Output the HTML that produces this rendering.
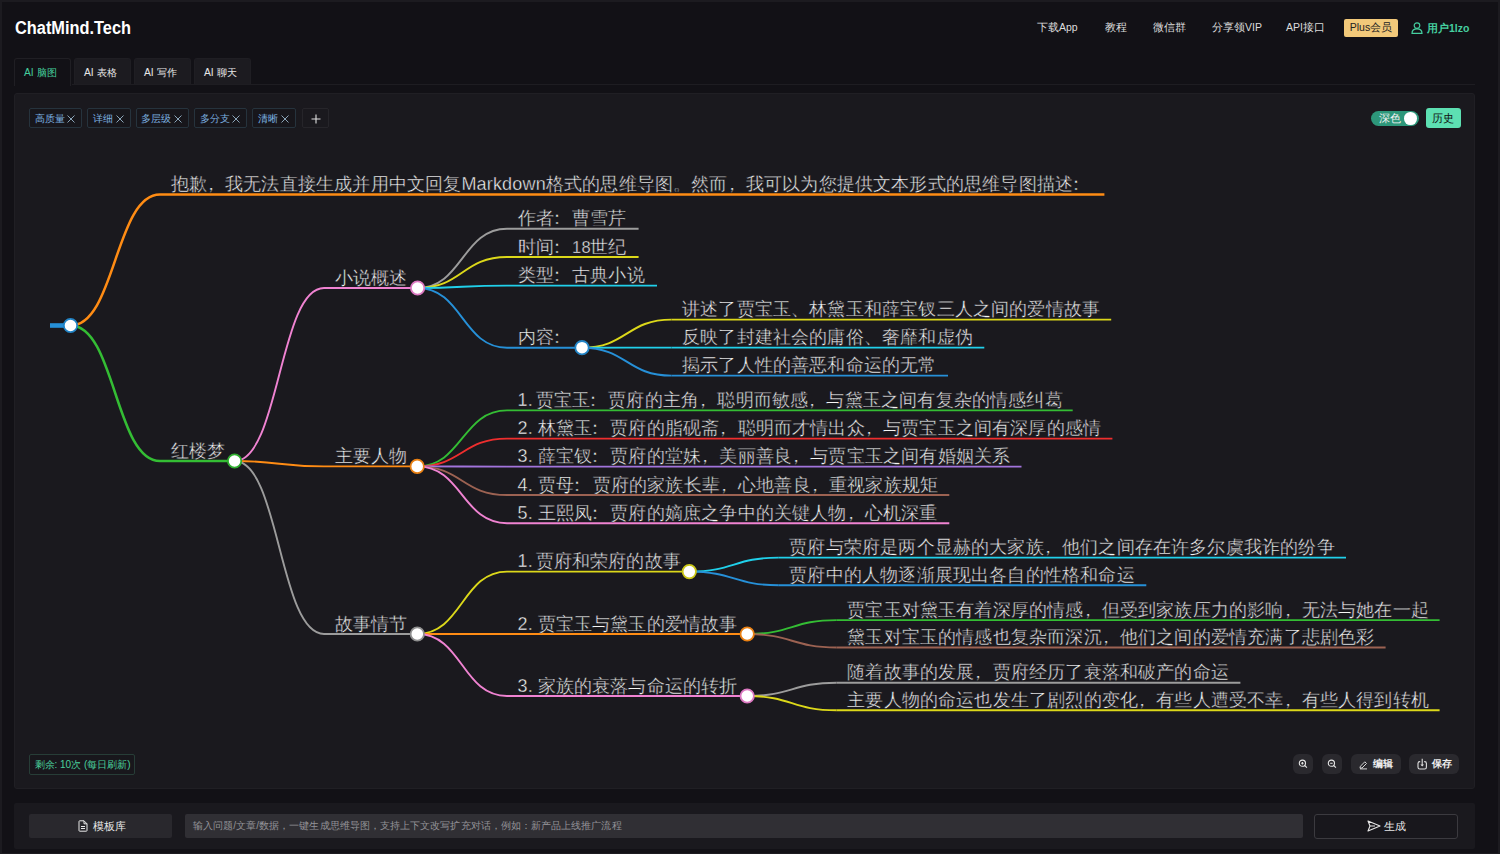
<!DOCTYPE html>
<html><head><meta charset="utf-8">
<style>
*{box-sizing:border-box;margin:0;padding:0}
html,body{width:1500px;height:854px;overflow:hidden}
body{background:#121116;font-family:"Liberation Sans",sans-serif;color:#e6e6e6;position:relative}
.abs{position:absolute}
.frameL{left:0;top:0;width:1.5px;height:854px;background:#1c1b20}
.frameB{left:0;top:852.5px;width:1500px;height:1.5px;background:#1c1b20}
.frameT{left:0;top:0;width:1500px;height:1.5px;background:#1c1b20}
.frameR{left:1498.3px;top:0;width:1.7px;height:854px;background:#1c1b20}
.logo{left:14.5px;top:18px;font-size:17.5px;font-weight:bold;color:#fff;line-height:20px;transform:scaleX(0.935);transform-origin:0 0}
.nav{top:19.8px;font-size:10.5px;line-height:14px;color:#dcdcdc;white-space:nowrap}
.plus{left:1344px;top:19px;width:54px;height:17.5px;background:#f2c97a;border-radius:2px;color:#222;font-size:10.5px;line-height:17.5px;text-align:center}
.user{left:1427px;top:20.7px;font-size:10.5px;line-height:14px;color:#45cf9f;font-weight:bold}
.tab{top:57.5px;width:57px;height:27px;background:#1c1b20;border:1px solid #1f1e23;border-bottom:none;border-radius:3px 3px 0 0;font-size:10.3px;line-height:27px;color:#e8e8e8;padding-left:9px;white-space:nowrap}
.tab.act{background:#121116;border-color:#201f24;color:#45cf9f;height:28px}
.tabline{left:72px;top:84px;width:1403px;height:1px;background:#1e1d22}
.panel{left:14px;top:92.5px;width:1461px;height:696px;background:#1a191e;border:1px solid #201f24;border-radius:3px}
.tag{top:108px;height:20px;border:1px solid #26333d;background:#17161b;border-radius:2px;font-size:9.8px;line-height:19.5px;color:#7cb0e0;padding-left:4.5px;white-space:nowrap}
.tag i{font-style:normal;color:#8aa4b8;font-size:11px;position:absolute;right:6px;top:0}
.tagplus{left:302px;top:108px;width:27px;height:20px;border:1px solid #26252a;border-radius:2px;color:#e0e0e0;font-size:15px;line-height:17px;text-align:center}
.toggle{left:1371px;top:110.8px;width:48px;height:15.6px;background:#2d977a;border-radius:8px}
.toggle span{position:absolute;left:8px;top:0;font-size:10.5px;line-height:15.6px;color:#f0f0f0}
.toggle b{position:absolute;left:33px;top:1.6px;width:12.6px;height:12.6px;border-radius:50%;background:#fff}
.hist{left:1425.5px;top:108px;width:35px;height:20px;background:#5de0b2;border-radius:3px;color:#111;font-size:11px;line-height:20px;text-align:center}
.remain{left:28.5px;top:754px;width:106px;height:21px;border:1px solid #273d37;background:#18171c;border-radius:2px;color:#4acf9c;font-size:10px;line-height:19px;padding-left:5px;white-space:nowrap}
.tbtn{top:754px;height:20px;background:#2a292e;border-radius:6px;color:#eee;font-size:10px;line-height:20px;white-space:nowrap}
.bar{left:14px;top:802.5px;width:1461px;height:46px;background:#1a191e;border-radius:2px}
.tpl{left:29px;top:814px;width:142.5px;height:24px;background:#29282d;border-radius:2px;font-size:11px;line-height:24px;color:#e8e8e8}
.inp{left:184.5px;top:814px;width:1118px;height:24px;background:#302f34;border-radius:2px;font-size:10px;letter-spacing:0.07px;line-height:24px;color:#939297;padding-left:8.5px;white-space:nowrap}
.gen{left:1314px;top:813.5px;width:144px;height:25px;border:1px solid #3b3a3f;background:#18171c;border-radius:3px;font-size:11px;line-height:23px;color:#e8e8e8}
svg.mm{position:absolute;left:0;top:0}
svg.mm .tx text{font-family:"Liberation Sans",sans-serif;font-size:18px;letter-spacing:0.18px;fill:#f6f6f6;stroke:#1a191e;stroke-width:0.4px}
</style></head>
<body>
<div class="abs frameL"></div><div class="abs frameT"></div><div class="abs frameR"></div><div class="abs frameB"></div>
<div class="abs logo">ChatMind.Tech</div>
<div class="abs nav" style="left:1037px">下载App</div>
<div class="abs nav" style="left:1104.5px">教程</div>
<div class="abs nav" style="left:1153px">微信群</div>
<div class="abs nav" style="left:1212px">分享领VIP</div>
<div class="abs nav" style="left:1286px">API接口</div>
<div class="abs plus">Plus会员</div>
<svg class="abs" style="left:1411px;top:21.5px" width="12" height="12" viewBox="0 0 12 12"><circle cx="6" cy="3.6" r="2.8" fill="none" stroke="#45cf9f" stroke-width="1.2"/><path d="M1,11.4 C1,8.2 3,6.9 6,6.9 C9,6.9 11,8.2 11,11.4 Z" fill="none" stroke="#45cf9f" stroke-width="1.2"/></svg>
<div class="abs user">用户1lzo</div>

<div class="abs tab act" style="left:14px">AI 脑图</div>
<div class="abs tab" style="left:74px">AI 表格</div>
<div class="abs tab" style="left:134px">AI 写作</div>
<div class="abs tab" style="left:194px">AI 聊天</div>
<div class="abs tabline"></div>

<div class="abs panel"></div>
<div class="abs tag" style="left:29px;width:53px">高质量<svg class="abs" style="right:6px;top:5.5px" width="8" height="8" viewBox="0 0 8 8"><path d="M0.5,0.5 L7.5,7.5 M7.5,0.5 L0.5,7.5" stroke="#8aa4b8" stroke-width="1"/></svg></div>
<div class="abs tag" style="left:87px;width:43.5px">详细<svg class="abs" style="right:6px;top:5.5px" width="8" height="8" viewBox="0 0 8 8"><path d="M0.5,0.5 L7.5,7.5 M7.5,0.5 L0.5,7.5" stroke="#8aa4b8" stroke-width="1"/></svg></div>
<div class="abs tag" style="left:135.5px;width:53.5px">多层级<svg class="abs" style="right:6px;top:5.5px" width="8" height="8" viewBox="0 0 8 8"><path d="M0.5,0.5 L7.5,7.5 M7.5,0.5 L0.5,7.5" stroke="#8aa4b8" stroke-width="1"/></svg></div>
<div class="abs tag" style="left:194px;width:53px">多分支<svg class="abs" style="right:6px;top:5.5px" width="8" height="8" viewBox="0 0 8 8"><path d="M0.5,0.5 L7.5,7.5 M7.5,0.5 L0.5,7.5" stroke="#8aa4b8" stroke-width="1"/></svg></div>
<div class="abs tag" style="left:252px;width:43.5px">清晰<svg class="abs" style="right:6px;top:5.5px" width="8" height="8" viewBox="0 0 8 8"><path d="M0.5,0.5 L7.5,7.5 M7.5,0.5 L0.5,7.5" stroke="#8aa4b8" stroke-width="1"/></svg></div>
<div class="abs tagplus"><svg class="abs" style="left:8px;top:4.5px" width="10" height="10" viewBox="0 0 10 10"><path d="M5,0.5 V9.5 M0.5,5 H9.5" stroke="#e0e0e0" stroke-width="1.1"/></svg></div>
<div class="abs toggle"><span>深色</span><b></b></div>
<div class="abs hist">历史</div>

<svg class="mm" width="1500" height="854" viewBox="0 0 1500 854">
<line x1="50" y1="325.5" x2="70.5" y2="325.5" stroke="#2690d8" stroke-width="4.6"/>
<g fill="none"><path d="M70.5,325.5C115.25,325.5 115.25,194.6 160,194.6" stroke="#ff8c14" stroke-width="2.5"/><path d="M70.5,325.5C115.25,325.5 115.25,461 160,461" stroke="#34bd34" stroke-width="2.5"/><path d="M234.6,461C279.3,461 279.3,288 324,288" stroke="#f083d2" stroke-width="1.9"/><path d="M234.6,461C279.3,461 279.3,466.4 324,466.4" stroke="#ff8c14" stroke-width="1.9"/><path d="M234.6,461C279.3,461 279.3,634 324,634" stroke="#9c9c9c" stroke-width="1.9"/><path d="M417.6,288C462.3,288 462.3,228.8 507,228.8" stroke="#9c9c9c" stroke-width="1.9"/><path d="M417.6,288C462.3,288 462.3,257 507,257" stroke="#dcd81a" stroke-width="1.9"/><path d="M417.6,288C462.3,288 462.3,285.6 507,285.6" stroke="#20d0ea" stroke-width="1.9"/><path d="M417.6,288C462.3,288 462.3,347.7 507,347.7" stroke="#2690d8" stroke-width="1.9"/><path d="M582,347.7C626.75,347.7 626.75,319.6 671.5,319.6" stroke="#dcd81a" stroke-width="1.9"/><path d="M582,347.7C626.75,347.7 626.75,347.6 671.5,347.6" stroke="#20d0ea" stroke-width="1.9"/><path d="M582,347.7C626.75,347.7 626.75,375.6 671.5,375.6" stroke="#2690d8" stroke-width="1.9"/><path d="M417.2,466.4C462.1,466.4 462.1,410.4 507,410.4" stroke="#34bd34" stroke-width="1.9"/><path d="M417.2,466.4C462.1,466.4 462.1,438.6 507,438.6" stroke="#ee2e2e" stroke-width="1.9"/><path d="M417.2,466.4C462.1,466.4 462.1,466.6 507,466.6" stroke="#a274dc" stroke-width="1.9"/><path d="M417.2,466.4C462.1,466.4 462.1,495 507,495" stroke="#9c6252" stroke-width="1.9"/><path d="M417.2,466.4C462.1,466.4 462.1,523.2 507,523.2" stroke="#f083d2" stroke-width="1.9"/><path d="M417.3,634C462.15,634 462.15,571.6 507,571.6" stroke="#dcd81a" stroke-width="1.9"/><path d="M417.3,634C462.15,634 462.15,634 507,634" stroke="#ff8c14" stroke-width="1.9"/><path d="M417.3,634C462.15,634 462.15,696 507,696" stroke="#f083d2" stroke-width="1.9"/><path d="M689.3,571.6C734.05,571.6 734.05,557.6 778.8,557.6" stroke="#20d0ea" stroke-width="1.9"/><path d="M689.3,571.6C734.05,571.6 734.05,585.2 778.8,585.2" stroke="#2690d8" stroke-width="1.9"/><path d="M747.2,634C791.95,634 791.95,620.1 836.7,620.1" stroke="#34bd34" stroke-width="1.9"/><path d="M747.2,634C791.95,634 791.95,647.5 836.7,647.5" stroke="#9c6252" stroke-width="1.9"/><path d="M747.2,696C791.95,696 791.95,682.7 836.7,682.7" stroke="#9c9c9c" stroke-width="1.9"/><path d="M747.2,696C791.95,696 791.95,710.3 836.7,710.3" stroke="#dcd81a" stroke-width="1.9"/><line x1="160" y1="194.6" x2="1104.4" y2="194.6" stroke="#ff8c14" stroke-width="2.5"/><line x1="160" y1="461" x2="234.6" y2="461" stroke="#34bd34" stroke-width="2.5"/><line x1="324" y1="288" x2="417.6" y2="288" stroke="#f083d2" stroke-width="1.9"/><line x1="324" y1="466.4" x2="417.2" y2="466.4" stroke="#ff8c14" stroke-width="1.9"/><line x1="324" y1="634" x2="417.3" y2="634" stroke="#9c9c9c" stroke-width="1.9"/><line x1="507" y1="228.8" x2="638.6" y2="228.8" stroke="#9c9c9c" stroke-width="1.9"/><line x1="507" y1="257" x2="638.6" y2="257" stroke="#dcd81a" stroke-width="1.9"/><line x1="507" y1="285.6" x2="657" y2="285.6" stroke="#20d0ea" stroke-width="1.9"/><line x1="507" y1="347.7" x2="582" y2="347.7" stroke="#2690d8" stroke-width="1.9"/><line x1="671.5" y1="319.6" x2="1111.2" y2="319.6" stroke="#dcd81a" stroke-width="1.9"/><line x1="671.5" y1="347.6" x2="984.3" y2="347.6" stroke="#20d0ea" stroke-width="1.9"/><line x1="671.5" y1="375.6" x2="948" y2="375.6" stroke="#2690d8" stroke-width="1.9"/><line x1="507" y1="410.4" x2="1072.7" y2="410.4" stroke="#34bd34" stroke-width="1.9"/><line x1="507" y1="438.6" x2="1112.4" y2="438.6" stroke="#ee2e2e" stroke-width="1.9"/><line x1="507" y1="466.6" x2="1021.5" y2="466.6" stroke="#a274dc" stroke-width="1.9"/><line x1="507" y1="495" x2="949.3" y2="495" stroke="#9c6252" stroke-width="1.9"/><line x1="507" y1="523.2" x2="949.3" y2="523.2" stroke="#f083d2" stroke-width="1.9"/><line x1="507" y1="571.6" x2="689.3" y2="571.6" stroke="#dcd81a" stroke-width="1.9"/><line x1="507" y1="634" x2="747.2" y2="634" stroke="#ff8c14" stroke-width="1.9"/><line x1="507" y1="696" x2="747.2" y2="696" stroke="#f083d2" stroke-width="1.9"/><line x1="778.8" y1="557.6" x2="1346" y2="557.6" stroke="#20d0ea" stroke-width="1.9"/><line x1="778.8" y1="585.2" x2="1146.3" y2="585.2" stroke="#2690d8" stroke-width="1.9"/><line x1="836.7" y1="620.1" x2="1439.6" y2="620.1" stroke="#34bd34" stroke-width="1.9"/><line x1="836.7" y1="647.5" x2="1385.6" y2="647.5" stroke="#9c6252" stroke-width="1.9"/><line x1="836.7" y1="682.7" x2="1240.4" y2="682.7" stroke="#9c9c9c" stroke-width="1.9"/><line x1="836.7" y1="710.3" x2="1439.6" y2="710.3" stroke="#dcd81a" stroke-width="1.9"/></g>
<circle cx="70.5" cy="325.5" r="6.7" fill="#fff" stroke="#2284c6" stroke-width="1.8"/>
<circle cx="234.6" cy="461" r="6.7" fill="#fff" stroke="#2fad2f" stroke-width="1.8"/><circle cx="417.6" cy="288" r="6.7" fill="#fff" stroke="#dc78c1" stroke-width="1.8"/><circle cx="417.2" cy="466.4" r="6.7" fill="#fff" stroke="#ea8012" stroke-width="1.8"/><circle cx="417.3" cy="634" r="6.7" fill="#fff" stroke="#8f8f8f" stroke-width="1.8"/><circle cx="582" cy="347.7" r="6.7" fill="#fff" stroke="#2284c6" stroke-width="1.8"/><circle cx="689.3" cy="571.6" r="6.7" fill="#fff" stroke="#cac617" stroke-width="1.8"/><circle cx="747.2" cy="634" r="6.7" fill="#fff" stroke="#ea8012" stroke-width="1.8"/><circle cx="747.2" cy="696" r="6.7" fill="#fff" stroke="#dc78c1" stroke-width="1.8"/>
<g class="tx"><text x="170.5" y="190.1">抱歉<tspan dx="-5">，</tspan><tspan dx="5">我无法直接生成并用中文回复Markdown格式的思维导图。然而</tspan><tspan dx="-5">，</tspan><tspan dx="5">我可以为您提供文本形式的思维导图描述</tspan><tspan dx="-6">：</tspan><tspan dx="6"></tspan></text><text x="170.5" y="456.5">红楼梦</text><text x="334.5" y="283.5">小说概述</text><text x="334.5" y="461.9">主要人物</text><text x="334.5" y="629.5">故事情节</text><text x="517.5" y="224.3">作者<tspan dx="-6">：</tspan><tspan dx="6">曹雪芹</tspan></text><text x="517.5" y="252.5">时间<tspan dx="-6">：</tspan><tspan dx="6"><tspan style="font-size:16.5px">18</tspan></tspan><tspan dx="-0.5">世纪</tspan></text><text x="517.5" y="281.1">类型<tspan dx="-6">：</tspan><tspan dx="6">古典小说</tspan></text><text x="517.5" y="343.2">内容<tspan dx="-6">：</tspan><tspan dx="6"></tspan></text><text x="682.0" y="315.1">讲述了贾宝玉、林黛玉和薛宝钗三人之间的爱情故事</text><text x="682.0" y="343.1">反映了封建社会的庸俗、奢靡和虚伪</text><text x="682.0" y="371.1">揭示了人性的善恶和命运的无常</text><text x="517.5" y="405.9">1. <tspan dx="-2.5">贾宝玉</tspan><tspan dx="-6">：</tspan><tspan dx="6">贾府的主角</tspan><tspan dx="-5">，</tspan><tspan dx="5">聪明而敏感</tspan><tspan dx="-5">，</tspan><tspan dx="5">与黛玉之间有复杂的情感纠葛</tspan></text><text x="517.5" y="434.1">2. <tspan dx="-0.5">林黛玉</tspan><tspan dx="-6">：</tspan><tspan dx="6">贾府的脂砚斋</tspan><tspan dx="-5">，</tspan><tspan dx="5">聪明而才情出众</tspan><tspan dx="-5">，</tspan><tspan dx="5">与贾宝玉之间有深厚的感情</tspan></text><text x="517.5" y="462.1">3. <tspan dx="-0.5">薛宝钗</tspan><tspan dx="-6">：</tspan><tspan dx="6">贾府的堂妹</tspan><tspan dx="-5">，</tspan><tspan dx="5">美丽善良</tspan><tspan dx="-5">，</tspan><tspan dx="5">与贾宝玉之间有婚姻关系</tspan></text><text x="517.5" y="490.5">4. 贾母<tspan dx="-6">：</tspan><tspan dx="6">贾府的家族长辈</tspan><tspan dx="-5">，</tspan><tspan dx="5">心地善良</tspan><tspan dx="-5">，</tspan><tspan dx="5">重视家族规矩</tspan></text><text x="517.5" y="518.7">5. <tspan dx="-0.5">王熙凤</tspan><tspan dx="-6">：</tspan><tspan dx="6">贾府的嫡庶之争中的关键人物</tspan><tspan dx="-5">，</tspan><tspan dx="5">心机深重</tspan></text><text x="517.5" y="567.1">1. <tspan dx="-2.5">贾府和荣府的故事</tspan></text><text x="517.5" y="629.5">2. <tspan dx="-0.5">贾宝玉与黛玉的爱情故事</tspan></text><text x="517.5" y="691.5">3. <tspan dx="-0.5">家族的衰落与命运的转折</tspan></text><text x="789.3" y="553.1">贾府与荣府是两个显赫的大家族<tspan dx="-5">，</tspan><tspan dx="5">他们之间存在许多尔虞我诈的纷争</tspan></text><text x="789.3" y="580.7">贾府中的人物逐渐展现出各自的性格和命运</text><text x="847.2" y="615.6">贾宝玉对黛玉有着深厚的情感<tspan dx="-5">，</tspan><tspan dx="5">但受到家族压力的影响</tspan><tspan dx="-5">，</tspan><tspan dx="5">无法与她在一起</tspan></text><text x="847.2" y="643.0">黛玉对宝玉的情感也复杂而深沉<tspan dx="-5">，</tspan><tspan dx="5">他们之间的爱情充满了悲剧色彩</tspan></text><text x="847.2" y="678.2">随着故事的发展<tspan dx="-5">，</tspan><tspan dx="5">贾府经历了衰落和破产的命运</tspan></text><text x="847.2" y="705.8">主要人物的命运也发生了剧烈的变化<tspan dx="-5">，</tspan><tspan dx="5">有些人遭受不幸</tspan><tspan dx="-5">，</tspan><tspan dx="5">有些人得到转机</tspan></text></g>
</svg>

<div class="abs remain">剩余: 10次 (每日刷新)</div>
<div class="abs tbtn" style="left:1293px;width:20px"><svg width="20" height="20" viewBox="0 0 20 20"><circle cx="9.4" cy="9.2" r="3.1" fill="none" stroke="#e8e8e8" stroke-width="1.1"/><path d="M11.6,11.4 L13.9,13.7 M8.2,9.2 H10.6 M9.4,8 V10.4" stroke="#e8e8e8" stroke-width="1.1" fill="none"/></svg></div>
<div class="abs tbtn" style="left:1322px;width:20px"><svg width="20" height="20" viewBox="0 0 20 20"><circle cx="9.4" cy="9.2" r="3.1" fill="none" stroke="#e8e8e8" stroke-width="1.1"/><path d="M11.6,11.4 L13.9,13.7 M8.2,9.2 H10.6" stroke="#e8e8e8" stroke-width="1.1" fill="none"/></svg></div>
<div class="abs tbtn" style="left:1350.5px;width:50px"><svg class="abs" style="left:8.5px;top:5.5px" width="10" height="10" viewBox="0 0 10 10"><path d="M1,8.2 L1.3,6.3 L5.8,1.8 L7.5,3.5 L3,8 Z M1,8.9 H8" fill="none" stroke="#e8e8e8" stroke-width="0.9"/></svg><span class="abs" style="left:22.5px;top:0;font-weight:bold">编辑</span></div>
<div class="abs tbtn" style="left:1409px;width:50px"><svg class="abs" style="left:7.5px;top:4px" width="11" height="12" viewBox="0 0 11 12"><path d="M3.2,3.6 H2.8 Q1,3.6 1,5.4 V9.2 Q1,11 2.8,11 H7.6 Q9.4,11 9.4,9.2 V5.4 Q9.4,3.6 7.6,3.6 H7.2 M5.2,0.8 V7.6" fill="none" stroke="#e0e0e0" stroke-width="1.1"/><path d="M3.4,6.4 L5.2,8.4 L7,6.4 Z" fill="#e0e0e0"/></svg><span class="abs" style="left:23px;top:0;font-weight:bold">保存</span></div>

<div class="abs bar"></div>
<div class="abs tpl"><svg class="abs" style="left:49px;top:6px" width="10" height="12" viewBox="0 0 10 12"><path d="M1,1.5 Q1,0.8 1.7,0.8 H6 L9,3.8 V10.5 Q9,11.2 8.3,11.2 H1.7 Q1,11.2 1,10.5 Z M6,0.8 V3.8 H9 M3,6.5 H7 M3,8.5 H7" fill="none" stroke="#e8e8e8" stroke-width="1"/></svg><span class="abs" style="left:64px;top:0">模板库</span></div>
<div class="abs inp">输入问题/文章/数据，一键生成思维导图，支持上下文改写扩充对话，例如：新产品上线推广流程</div>
<div class="abs gen"><svg class="abs" style="left:52px;top:5.5px" width="14" height="12" viewBox="0 0 14 12"><path d="M1,1 L13,6 L1,11 L3,6 Z M3,6 H8" fill="none" stroke="#e8e8e8" stroke-width="1.1" stroke-linejoin="round"/></svg><span class="abs" style="left:69px;top:0">生成</span></div>
</body></html>
